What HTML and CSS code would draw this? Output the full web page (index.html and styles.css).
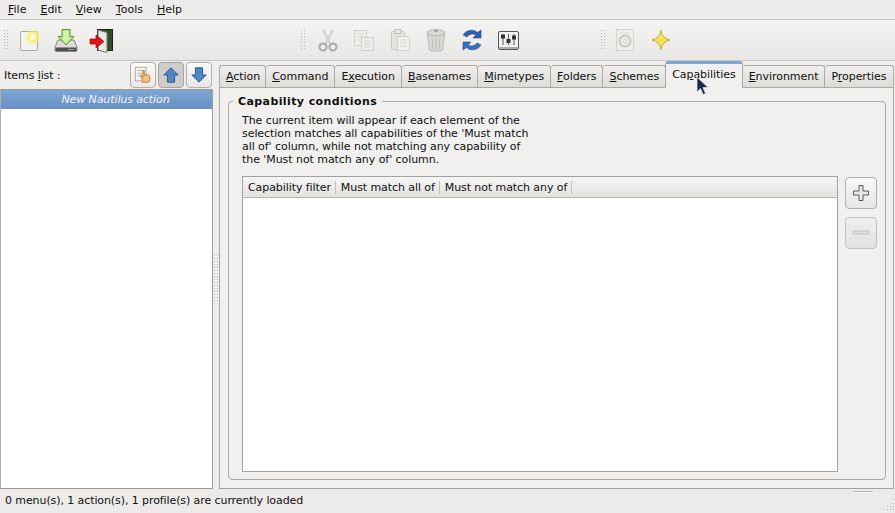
FILE: index.html
```html
<!DOCTYPE html>
<html lang="en">
<head>
  <meta charset="UTF-8" />
  <title>Nautilus Actions</title>
  <link rel="stylesheet" href="styles.css">
</head>
<body>
<div class="window">
  <div class="menubar">
    <span class="menu"><u>F</u>ile</span>
    <span class="menu"><u>E</u>dit</span>
    <span class="menu"><u>V</u>iew</span>
    <span class="menu"><u>T</u>ools</span>
    <span class="menu"><u>H</u>elp</span>
  </div>

  <div class="toolbar">
    <div class="tb-group tb-file">
      <span class="grip"></span>
      <svg class="tool" viewBox="0 0 26 26"><defs><radialGradient id="glow"><stop offset="0.45" stop-color="#fff04a"/><stop offset="1" stop-color="#fff27a" stop-opacity="0"/></radialGradient></defs><rect x="3.500" y="4.500" width="17" height="19" rx="1" fill="#f3f2ee" stroke="#a9a9a4"/><circle cx="16" cy="10" r="8" fill="url(#glow)"/><path d="M16 5l1.500 3 3.300.4-2.400 2.300.6 3.300-3-1.600-3 1.600.6-3.300-2.400-2.300 3.300-.4z" fill="#fff" stroke="#f5ea60" stroke-width=".6"/></svg>
      <svg class="tool" viewBox="0 0 26 26"><path d="M5 13h16l3 7v4H2v-4z" fill="#dcdcd8" stroke="#8a8a86"/><rect x="2.500" y="20.500" width="21" height="4" fill="#4d504e"/><rect x="15" y="22" width="6" height="1" fill="#9a9a9a"/><path d="M9 2.500h8v7h4l-8 8.500-8-8.500h4z" fill="#b8e486" stroke="#5c9a2c"/><path d="M10.500 4v7H8l5 5 5-5h-2.500V4z" fill="#d3f0ae"/></svg>
      <svg class="tool" viewBox="0 0 26 26"><rect x="8.500" y="2.500" width="15" height="21" fill="#2f5027" stroke="#1c1c1c"/><path d="M9 3l9 2.500v20L9 23z" fill="#e9e9e6" stroke="#777"/><path d="M1 12h6V8l8 6.500L7 21v-4H1z" fill="#e5101a" stroke="#8e0b10" stroke-width=".7"/></svg>
    </div>
    <div class="tb-group tb-edit">
      <span class="grip"></span>
      <svg class="tool" viewBox="0 0 26 26"><g fill="none"><path d="M8 3l7 13M18 3l-7 13" stroke="#d2d1ce" stroke-width="2.400"/><circle cx="8" cy="20" r="3.500" stroke="#aaa7a7" stroke-width="2"/><circle cx="18" cy="20" r="3.500" stroke="#aaa7a7" stroke-width="2"/></g></svg>
      <svg class="tool" viewBox="0 0 26 26"><g fill="#eeeeeb" stroke="#cfcfcc"><rect x="3.500" y="3.500" width="12" height="15"/><rect x="10.500" y="10.500" width="12" height="13"/></g><path d="M6 7h7M6 10h7M6 13h3M13 14h7M13 17h7M13 20h7" stroke="#d4d4d1"/></svg>
      <svg class="tool" viewBox="0 0 26 26"><rect x="4.500" y="4.500" width="13" height="18" rx="1" fill="#e4e4e1" stroke="#c6c6c3"/><rect x="8" y="2.500" width="6" height="4" fill="#e9e9e6" stroke="#bcbcb9"/><rect x="10.500" y="9.500" width="12" height="14" fill="#f2f2ef" stroke="#cfcfcc"/><path d="M13 13h7M13 16h7M13 19h7" stroke="#d4d4d1"/></svg>
      <svg class="tool" viewBox="0 0 26 26"><ellipse cx="13" cy="6" rx="9" ry="3.500" fill="#d9d9d6" stroke="#b8b8b5"/><path d="M4.500 7l2 16c2 1.500 11 1.500 13 0l2-16c-3 2.500-14 2.500-17 0z" fill="#d8d8d5" stroke="#b8b8b5"/><path d="M9 11l1 11M13 11.500V23M17 11l-1 11" stroke="#b8b8b5"/><rect x="11" y="3" width="4" height="2" fill="#a8a8a5"/></svg>
      <svg class="tool" viewBox="0 0 26 26"><path d="M22 3v8h-8l3-3c-3-2-7-1-9 2L4 8c3-5 10-6.500 14.500-2.500z" fill="#2f62a8" stroke="#1e4a8a" stroke-width=".6"/><path d="M4 23v-8h8l-3 3c3 2 7 1 9-2l4 2c-3 5-10 6.500-14.500 2.500z" fill="#3b70b8" stroke="#1e4a8a" stroke-width=".6"/></svg>
      <svg class="tool" viewBox="0 0 26 26"><rect x="3.500" y="4.500" width="20" height="18" rx="1.500" fill="#f2f2f0" stroke="#555"/><rect x="4" y="20" width="19" height="2" fill="#aaa"/><path d="M8 7v11M13.500 7v11M19 7v11" stroke="#555"/><rect x="6" y="7.500" width="4" height="4" fill="#333"/><rect x="11.500" y="12" width="4" height="4" fill="#333"/><rect x="17" y="8.500" width="4" height="4" fill="#333"/></svg>
    </div>
    <div class="tb-group tb-help">
      <span class="grip"></span>
      <svg class="tool" viewBox="0 0 26 26"><rect x="4.500" y="2.500" width="17" height="21" fill="#efefec" stroke="#d2d2cf"/><circle cx="13" cy="14" r="5.500" fill="none" stroke="#c6c6c3" stroke-width="2"/><circle cx="13" cy="14" r="2" fill="none" stroke="#d2d2cf"/><path d="M8 6h10" stroke="#d8d8d5"/></svg>
      <svg class="tool" viewBox="0 0 26 26"><path d="M13 3.500c1 5.500 3.500 8 9 9.500-5.500 1.500-8 4-9 9.500-1-5.500-3.500-8-9-9.500 5.500-1.500 8-4 9-9.500z" fill="#f5e25e" stroke="#c6a82a"/></svg>
    </div>
  </div>

  <div class="main">
    <div class="sidebar">
      <div class="items-head">
        <span class="items-label">Items <u>l</u>ist :</span>
        <div class="items-btns">
          <button class="btn-small">
            <svg class="btn-icon" viewBox="0 0 20 20"><rect x="1.500" y="1.500" width="12" height="15" fill="#f4f4f0" stroke="#a8a8a4"/><path d="M4 5h7M4 8h7M4 11h4" stroke="#a8a8a4"/><path d="M9 18v-4L7.500 11c0-1 1-1 1.500 0l1 1V5.500c0-1.200 1.500-1.200 1.500 0V10h4.500c1 0 1.500 1 1.500 2v3l-1 3z" fill="#f5c280" stroke="#c8741c"/></svg>
          </button>
          <button class="btn-small pressed">
            <svg class="btn-icon" viewBox="0 0 20 20"><path d="M10 2l8 8h-4v8H6v-8H2z" fill="#4f86c4" stroke="#1f4f90"/></svg>
          </button>
          <button class="btn-small">
            <svg class="btn-icon" viewBox="0 0 20 20"><path d="M10 18l8-8h-4V2H6v8H2z" fill="#4f86c4" stroke="#1f4f90"/></svg>
          </button>
        </div>
      </div>
      <div class="items-list">
        <div class="item-selected">New Nautilus action</div>
      </div>
    </div>

    <div class="splitter"><span class="split-grip"></span></div>

    <div class="tabs-area">
      <div class="tabbar">
        <span class="tab"><u>A</u>ction</span>
        <span class="tab"><u>C</u>ommand</span>
        <span class="tab">E<u>x</u>ecution</span>
        <span class="tab"><u>B</u>asenames</span>
        <span class="tab"><u>M</u>imetypes</span>
        <span class="tab"><u>F</u>olders</span>
        <span class="tab"><u>S</u>chemes</span>
        <span class="tab tab-active">Ca<u>p</u>abilities</span>
        <span class="tab"><u>E</u>nvironment</span>
        <span class="tab">P<u>r</u>operties</span>
      </div>
      <div class="tab-pane">
        <fieldset class="group">
          <legend class="group-title">Capability conditions</legend>
          <p class="group-text">The current item will appear if each element of the<br>selection matches all capabilities of the 'Must match<br>all of' column, while not matching any capability of<br>the 'Must not match any of' column.</p>
          <div class="table-row">
            <div class="table">
              <div class="table-head">
                <span class="col">Capability filter</span>
                <span class="col">Must match all of</span>
                <span class="col">Must not match any of</span>
              </div>
            </div>
            <div class="side-btns">
              <button class="btn-big">
                <svg class="big-icon" viewBox="0 0 18 18"><path d="M7 1.500h4v5.500h5.500v4H11v5.500H7V11H1.500V7H7z" fill="#e8e8e5" stroke="#5a5a58"/></svg>
              </button>
              <button class="btn-big disabled">
                <svg class="big-icon" viewBox="0 0 18 18"><rect x="1.500" y="7" width="15" height="3" fill="#dededb" stroke="#c2c2bf"/></svg>
              </button>
            </div>
          </div>
        </fieldset>
      </div>
    </div>
  </div>

  <div class="statusbar">
    <span class="status-text">0 menu(s), 1 action(s), 1 profile(s) are currently loaded</span>
    <span class="status-mark"></span>
    <span class="resize-grip"></span>
  </div>

  <svg class="cursor" viewBox="0 0 14 20"><path d="M1 1v15l3.500-3.500 2.500 6 2.500-1-2.500-6h5z" fill="#1c2a44" stroke="#e8e8f0" stroke-width=".7"/></svg>
</div>
</body>
</html>
```

FILE: styles.css
```css
html,body{margin:0;padding:0;}
body{
  width:895px;height:513px;overflow:hidden;
  font-family:'DejaVu Sans',sans-serif;font-size:11px;color:#101010;
  background:#efeeec;
}
.window{position:relative;width:895px;height:513px;display:flex;flex-direction:column;}

.menubar{
  height:20px;box-sizing:border-box;display:flex;align-items:center;
  padding:0 0 1px 8px;gap:14px;
  background:#edecea;border-bottom:1px solid #c9c8c5;
}

.toolbar{
  height:41px;box-sizing:border-box;display:flex;align-items:center;
  background:linear-gradient(#f4f4f3,#e8e7e5);
  border-bottom:1px solid #c9c8c5;
}
.tb-group{display:flex;align-items:center;box-sizing:border-box;gap:10px;}
.tb-file{width:300px;padding-left:3px;}
.tb-edit{width:300px;}
.grip{
  width:6px;height:22px;
  background-image:radial-gradient(circle,#b5b4b1 .7px,transparent .8px);
  background-size:3px 3px;
}
.tb-file .grip{margin-right:-2px;}
.tb-edit .grip{margin-right:-1px;}
.tb-help .grip{margin-right:-4px;}
.tool{width:26px;height:26px;flex:none;}

.main{flex:1;display:flex;min-height:0;}

.sidebar{width:213px;flex:none;display:flex;flex-direction:column;}
.items-head{height:28px;display:flex;align-items:center;justify-content:space-between;padding-left:4px;}
.items-label{letter-spacing:-.1px;}
.items-btns{display:flex;gap:2px;padding-right:1px;}
.btn-small{
  width:26px;height:26px;padding:0;box-sizing:border-box;display:flex;align-items:center;justify-content:center;
  border:1px solid #b0afab;border-radius:4px;
  background:linear-gradient(#fbfbfa,#e9e8e6);
}
.btn-small.pressed{background:#cfcdc9;border-color:#a5a49f;}
.btn-icon{width:18px;height:18px;}
.items-list{
  flex:1;background:#fff;box-sizing:border-box;
  border:1px solid #9d9c98;border-left-color:#b0afab;
}
.item-selected{
  height:19px;line-height:19px;text-align:center;text-indent:18px;font-style:italic;color:#f2f5fa;
  letter-spacing:-.1px;
  background:linear-gradient(#7fa5d3,#6690c4);
}

.splitter{width:6px;flex:none;display:flex;align-items:center;justify-content:center;}
.split-grip{
  width:6px;height:48px;margin-top:5px;
  background-image:radial-gradient(circle,#b5b4b1 .7px,transparent .8px);
  background-size:3px 3px;
}

.tabs-area{flex:1;display:flex;flex-direction:column;min-width:0;padding-right:1px;}
.tabbar{height:26px;display:flex;align-items:flex-end;position:relative;z-index:1;}
.tab{
  height:22px;line-height:22px;box-sizing:border-box;padding:0 6px;
  background:linear-gradient(#f0efed,#dedcd9);
  border:1px solid #aaa9a5;border-bottom:none;border-left:none;border-radius:3px 3px 0 0;
  white-space:nowrap;letter-spacing:-.05px;
}
.tab:first-child{border-left:1px solid #aaa9a5;padding-right:5px;}
.tab-active{
  height:27px;line-height:21px;margin-bottom:-1px;margin-left:-1px;padding-bottom:3px;
  background:#f1f0ee;border:1px solid #aaa9a5;border-bottom:none;
  border-top:3px solid #7fa5d3;
  position:relative;
}
.tab-pane{
  flex:1;box-sizing:border-box;padding:7px 7px 8px 8px;
  background:#f1f0ee;border:1px solid #aaa9a5;border-bottom-color:#a3a29e;
}

.group{
  margin:0;height:385px;box-sizing:border-box;padding:0 40px 7px 13px;
  border:1px solid #aaa9a5;border-radius:4px;min-width:0;
  display:flex;flex-direction:column;
}
.group-title{font-weight:bold;padding:0 5px;margin-left:-9px;letter-spacing:.4px;}
.group-text{margin:6px 0 10px;line-height:13px;letter-spacing:-.06px;}
.table-row{flex:1;display:flex;min-height:0;}
.table{flex:1;background:#fff;border:1px solid #a3a29e;}
.table-head{
  height:20px;display:flex;align-items:center;
  background:linear-gradient(#f5f5f3,#e4e3e1);border-bottom:1px solid #b5b4b0;
}
.col{padding:0 4px 0 5px;border-right:1px solid #c0bfbb;line-height:13px;letter-spacing:-.08px;}
.side-btns{width:0;display:flex;flex-direction:column;gap:8px;margin:1px 0 0 7px;}
.btn-big{
  width:32px;height:32px;flex:none;padding:0;display:flex;align-items:center;justify-content:center;
  border:1px solid #b0afab;border-radius:4px;
  background:linear-gradient(#f9f9f8,#e6e5e3);
}
.btn-big.disabled{background:linear-gradient(#efeeec,#e3e2e0);border-color:#c2c1bd;}
.big-icon{width:18px;height:18px;}

.statusbar{
  height:24px;box-sizing:border-box;display:flex;align-items:center;
  padding:0 0 2px 5px;background:#ecebe9;
}
.status-text{letter-spacing:-.09px;}
.status-mark{
  width:20px;height:1px;margin:2px 10px 0 auto;align-self:flex-start;
  border-top:1px solid #b5b4b0;background:#fbfbfa;
}
.resize-grip{
  width:12px;height:12px;align-self:flex-end;
  background-image:radial-gradient(circle,#a9a8a5 .7px,transparent .8px);
  background-size:3px 3px;
  clip-path:polygon(100% 0,100% 100%,0 100%);
}

.cursor{position:absolute;left:696px;top:76px;width:14px;height:20px;z-index:5;}
```
